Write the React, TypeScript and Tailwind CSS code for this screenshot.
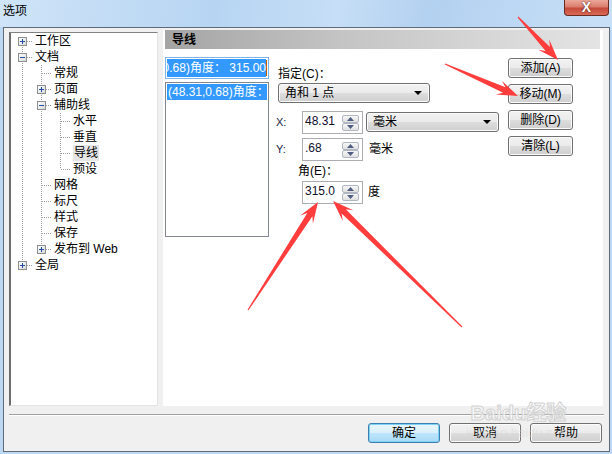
import React from "react";

type Row = {
  label: string;
  level: number;
  exp?: "+" | "-";
  last?: boolean;
  selected?: boolean;
};

const rows: Row[] = [
  { label: "工作区", level: 0, exp: "+" },
  { label: "文档", level: 0, exp: "-" },
  { label: "常规", level: 1 },
  { label: "页面", level: 1, exp: "+" },
  { label: "辅助线", level: 1, exp: "-" },
  { label: "水平", level: 2 },
  { label: "垂直", level: 2 },
  { label: "导线", level: 2, selected: true },
  { label: "预设", level: 2, last: true },
  { label: "网格", level: 1 },
  { label: "标尺", level: 1 },
  { label: "样式", level: 1 },
  { label: "保存", level: 1 },
  { label: "发布到 Web", level: 1, exp: "+", last: true },
  { label: "全局", level: 0, exp: "+", last: true },
];

// red annotation arrows: tail -> tip
const arrows = [
  [518, 17, 558, 60],
  [445, 64, 518, 96],
  [248, 310, 318, 202],
  [462, 327, 333, 201],
];

function arrowPoints([x0, y0, x1, y1]: number[]) {
  const len = Math.hypot(x1 - x0, y1 - y0);
  const ux = (x1 - x0) / len;
  const uy = (y1 - y0) / len;
  const nx = -uy;
  const ny = ux;
  const jx = x1 - ux * 15;
  const jy = y1 - uy * 15;
  const bx = x1 - ux * 21;
  const by = y1 - uy * 21;
  const p = [
    [x0 + nx * 0.6, y0 + ny * 0.6],
    [jx + nx * 3, jy + ny * 3],
    [bx + nx * 7.5, by + ny * 7.5],
    [x1, y1],
    [bx - nx * 7.5, by - ny * 7.5],
    [jx - nx * 3, jy - ny * 3],
    [x0 - nx * 0.6, y0 - ny * 0.6],
  ];
  return p.map(([a, b]) => `${a.toFixed(1)},${b.toFixed(1)}`).join(" ");
}

const BTN =
  "flex items-center justify-center rounded-[3px] border border-[#707070] bg-[linear-gradient(#f2f2f2,#ebebeb_50%,#dddddd_51%,#cfcfcf)] shadow-[inset_0_0_0_1px_#fbfbfb] text-[12px] text-black";

function TreeCell({ kind, first, last, exp }: { kind: "pass" | "own"; first?: boolean; last?: boolean; exp?: "+" | "-" }) {
  return (
    <svg width="19" height="16" viewBox="0 0 19 16" className="shrink-0">
      {kind === "pass" ? (
        <line x1="9.5" y1="0" x2="9.5" y2="16" stroke="#a0a0a0" strokeDasharray="1 1" />
      ) : (
        <>
          <line x1="9.5" y1={first ? 8 : 0} x2="9.5" y2={last ? 8 : 16} stroke="#a0a0a0" strokeDasharray="1 1" />
          <line x1="10" y1="8.5" x2="19" y2="8.5" stroke="#a0a0a0" strokeDasharray="1 1" />
          {exp && (
            <>
              <defs>
                <linearGradient id="eg" x1="0" y1="0" x2="1" y2="1">
                  <stop offset="0" stopColor="#ffffff" />
                  <stop offset="1" stopColor="#d6d6d6" />
                </linearGradient>
              </defs>
              <rect x="5.5" y="4.5" width="8" height="8" fill="url(#eg)" stroke="#8e8f8f" />
              <line x1="7" y1="8.5" x2="12" y2="8.5" stroke="#2352a5" />
              {exp === "+" && <line x1="9.5" y1="6" x2="9.5" y2="11" stroke="#2352a5" />}
            </>
          )}
        </>
      )}
    </svg>
  );
}

function SpinHalf({ up }: { up?: boolean }) {
  return (
    <div className="flex h-[8px] items-center justify-center rounded-[2px] border border-[#b0b6c2] bg-[linear-gradient(#f7f7f7,#e0e0e0)]">
      <svg width="7" height="4" viewBox="0 0 7 4">
        <path d={up ? "M0 4L3.5 0L7 4Z" : "M0 0L3.5 4L7 0Z"} fill="#4d5d80" />
      </svg>
    </div>
  );
}

function SpinBox({ value }: { value: string }) {
  return (
    <div className="flex h-[23px] w-[61px] items-center border border-[#abadb3] bg-white pl-[2px] pr-[3px]">
      <span className="flex-1 self-start pt-[2px] text-[12px] leading-[14px] text-[#10102a]">{value}</span>
      <div className="flex h-[16px] w-[17px] flex-col">
        <SpinHalf up />
        <SpinHalf />
      </div>
    </div>
  );
}

function Combo({ text, className }: { text: string; className: string }) {
  return (
    <div className={`${BTN} justify-between! pl-[6px] pr-[7px] ${className}`}>
      <span className="leading-[16px]">{text}</span>
      <svg width="8" height="4" viewBox="0 0 8 4">
        <path d="M0 0H8L4 4Z" fill="#000" />
      </svg>
    </div>
  );
}

export default function App() {
  return (
    <div className="relative h-[454px] w-[612px] overflow-hidden bg-[#bdd8f3] font-['Liberation_Sans','Noto_Sans_CJK_SC',sans-serif] text-[12px] text-black">
      {/* title bar */}
      <div className="flex h-[27px] items-start justify-between bg-[linear-gradient(100deg,#cfe4f8,#b7d5f2_35%,#c6def6_55%,#b3d1f0_70%,#c8e0f7)]">
        <span className="ml-[3px] mt-[3px] leading-[16px]">选项</span>
        <div className="mr-[3px] flex h-[16px] w-[45px] items-center justify-center rounded-b-[4px] border border-t-0 border-[#6b2a22] bg-[linear-gradient(#eba89b,#dc7d6e_45%,#c64a3b_55%,#d86a55)]">
          <span className="text-[14px] font-bold leading-[13px] text-white [text-shadow:0_0_2px_#3a1810]">X</span>
        </div>
      </div>

      {/* client area */}
      <div className="ml-[3px] flex h-[425px] w-[607px] flex-col border border-[#5f6b78] bg-[#f0f0f0]">
        <div className="flex h-[378px] items-start">
          {/* tree */}
          <div className="ml-[5px] mt-[4px] h-[374px] w-[149px] border-t border-b border-l-2 border-r border-t-[#828282] border-l-[#6e6e6e] border-b-[#e3e3e3] border-r-[#e3e3e3] bg-white pl-[2px]">
            {rows.map((r, i) => (
              <div key={i} className="flex h-[16px] items-center">
                {Array.from({ length: r.level }).map((_, k) => (
                  <TreeCell key={k} kind="pass" />
                ))}
                <TreeCell kind="own" first={i === 0} last={r.last} exp={r.exp} />
                <span className={`ml-[3px] leading-[16px] ${r.selected ? "bg-[#e6e6e6] px-[1px]" : ""}`}>{r.label}</span>
              </div>
            ))}
          </div>

          {/* right panel */}
          <div className="ml-[5px] mt-[2px] flex h-[376px] w-[440px] flex-col bg-white">
            <div className="ml-[2px] mr-[3px] flex h-[19px] items-center bg-[linear-gradient(90deg,#a4a4a4,#c4c4c4_40%,#e4e4e4)] pl-[7px]">
              <span className="font-bold leading-[14px]">导线</span>
            </div>
            <div className="flex">
              {/* list column */}
              <div className="ml-[2px] mt-[8px] w-[104px]">
                <div className="flex h-[22px] items-center border border-[#7eb4ea] bg-white px-[1px]">
                  <div className="flex h-[18px] flex-1 items-center justify-end overflow-hidden">
                    <span className="shrink-0 whitespace-pre bg-[#3399ff] leading-[18px] text-white">(48.31,0.68)角度： 315.00</span>
                  </div>
                  <div className="h-[16px] w-px bg-[#c06000]" />
                </div>
                <div className="mt-[3px] h-[155px] border border-[#828790] bg-white p-[1px]">
                  <div className="h-[16px] bg-[#3399ff] pl-[1px] leading-[16px] text-white whitespace-nowrap">(48.31,0.68)角度：</div>
                </div>
              </div>

              {/* middle column */}
              <div className="ml-[7px] w-[224px]">
                <div className="mt-[17px] h-[16px] pl-[2px] leading-[16px]">指定(C)：</div>
                <Combo text="角和 1 点" className="ml-[2px] mt-[1px] h-[20px] w-[152px]" />
                <div className="mt-[8px] flex h-[23px] items-start">
                  <span className="w-[26px] text-[11px] leading-[23px] text-[#1a2340]">X:</span>
                  <SpinBox value="48.31" />
                  <Combo text="毫米" className="ml-[3px] mt-px h-[20px] w-[133px]" />
                </div>
                <div className="mt-[4px] flex h-[23px] items-start">
                  <span className="w-[26px] text-[11px] leading-[23px] text-[#1a2340]">Y:</span>
                  <SpinBox value=".68" />
                  <span className="ml-[6px] leading-[23px]">毫米</span>
                </div>
                <div className="ml-[22px] mt-[2px] h-[16px] leading-[16px]">角(E)：</div>
                <div className="ml-[26px] mt-[2px] flex h-[23px] items-start">
                  <SpinBox value="315.0" />
                  <span className="ml-[5px] leading-[23px]">度</span>
                </div>
              </div>

              {/* action buttons */}
              <div className="ml-[8px] mt-[9px] flex w-[65px] flex-col gap-[6px]">
                <div className={`${BTN} h-[20px]`}>添加(A)</div>
                <div className={`${BTN} h-[20px]`}>移动(M)</div>
                <div className={`${BTN} h-[20px]`}>删除(D)</div>
                <div className={`${BTN} h-[20px]`}>清除(L)</div>
              </div>
            </div>
          </div>
        </div>

        <div className="mx-[5px] mt-[8px] h-[2px] border-t border-b border-t-[#a0a0a0] border-b-white" />

        <div className="mt-[7px] flex justify-end gap-[9px] pr-[7px]">
          <div className="flex h-[20px] w-[72px] items-center justify-center rounded-[3px] border border-[#3c7fb1] bg-[linear-gradient(#eaf6fd,#d9f0fc_50%,#bee6fd_51%,#a7d9f5)] shadow-[inset_0_0_0_1px_#7fd0f5]">
            确定
          </div>
          <div className={`${BTN} h-[20px] w-[72px]`}>取消</div>
          <div className={`${BTN} h-[20px] w-[72px]`}>帮助</div>
        </div>
      </div>

      {/* watermark */}
      <div className="pointer-events-none absolute left-[466px] top-[402px] flex flex-col items-center">
        <span className="text-[20px] font-bold leading-[22px] text-white/60 [-webkit-text-stroke:1px_#d2d2d2]">Baidu经验</span>
        <span className="mt-[2px] text-[13px] leading-[14px] text-[#d8d8d8]/50">jingyan.baidu.com</span>
      </div>

      {/* annotation arrows */}
      <svg className="pointer-events-none absolute left-0 top-0" width="612" height="454" viewBox="0 0 612 454">
        {arrows.map((a, i) => (
          <polygon key={i} points={arrowPoints(a)} fill="#ff3d3d" />
        ))}
      </svg>
    </div>
  );
}
